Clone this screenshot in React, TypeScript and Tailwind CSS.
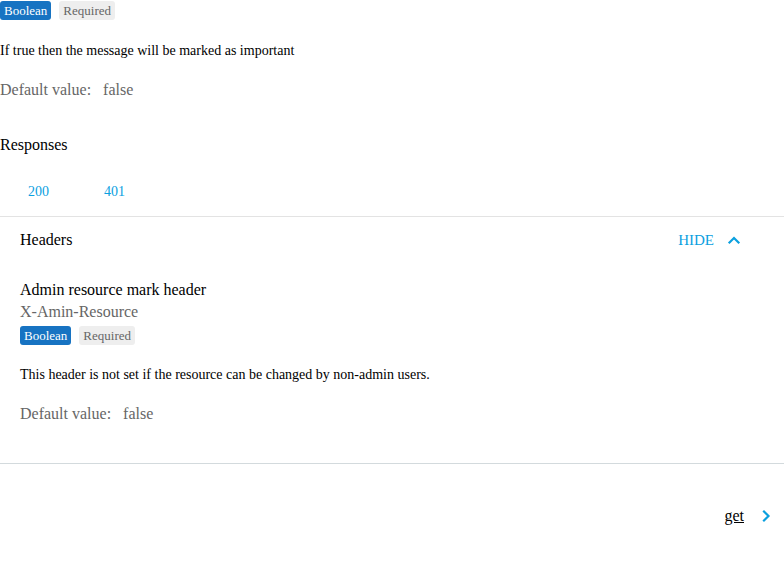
import React from "react";

const Chevron = ({ dir, className }: { dir: "up" | "right"; className?: string }) => (
  <svg width="14" height="14" viewBox="0 0 14 14" className={className} fill="none" stroke="currentColor" strokeWidth="2.2" strokeLinecap="square">
    {dir === "up" ? <path d="M2.5 9.5 L7 5 L11.5 9.5" /> : <path d="M5 2.5 L9.5 7 L5 11.5" />}
  </svg>
);

const Badges = () => (
  <div className="flex items-center gap-[8px]">
    <span className="bg-[#1773c2] text-white text-[13px] leading-[19px] px-[4px] rounded-[3px]">Boolean</span>
    <span className="bg-[#eeeeee] text-[#666666] text-[13px] leading-[19px] px-[4px] rounded-[3px]">Required</span>
  </div>
);

export default function App() {
  return (
    <div className="w-[784px] h-[584px] bg-white overflow-hidden" style={{ fontFamily: '"Liberation Serif", "Times New Roman", serif' }}>
      <div className="pt-[1px]">
        <Badges />
      </div>
      <p className="mt-[22px] text-[14px] leading-[18px] text-black">If true then the message will be marked as important</p>
      <p className="mt-[20px] text-[16px] leading-[20px] text-[#666666]">
        Default value:<span className="ml-[12px]">false</span>
      </p>
      <h3 className="mt-[35px] text-[16px] leading-[20px] text-black">Responses</h3>
      <div className="mt-[28px] flex text-[14px] leading-[18px] text-[#0ba0df]">
        <span className="ml-[28px]">200</span>
        <span className="ml-[55px]">401</span>
      </div>
      <div className="mt-[15px] border-t border-[#e3e3e3]">
        <div className="pl-[20px] pr-[43px] pt-[13px] flex items-center justify-between">
          <span className="text-[16px] leading-[20px] text-black">Headers</span>
          <span className="flex items-center text-[15px] leading-[20px] text-[#0ba0df]">
            HIDE
            <Chevron dir="up" className="ml-[13px]" />
          </span>
        </div>
        <div className="pl-[20px] pt-[29px] pb-[39px]">
          <div className="text-[16px] leading-[22px] text-black">Admin resource mark header</div>
          <div className="text-[16px] leading-[22px] text-[#666666]">X-Amin-Resource</div>
          <div className="mt-[3px]">
            <Badges />
          </div>
          <p className="mt-[21px] text-[14px] leading-[18px] text-black">This header is not set if the resource can be changed by non-admin users.</p>
          <p className="mt-[20px] text-[16px] leading-[20px] text-[#666666]">
            Default value:<span className="ml-[12px]">false</span>
          </p>
        </div>
      </div>
      <div className="border-t border-[#d3dadd]">
        <div className="pt-[42px] pr-[11px] flex justify-end items-center">
          <span className="text-[16px] leading-[20px] text-black underline">get</span>
          <Chevron dir="right" className="ml-[15px] text-[#0ba0df]" />
        </div>
      </div>
    </div>
  );
}
